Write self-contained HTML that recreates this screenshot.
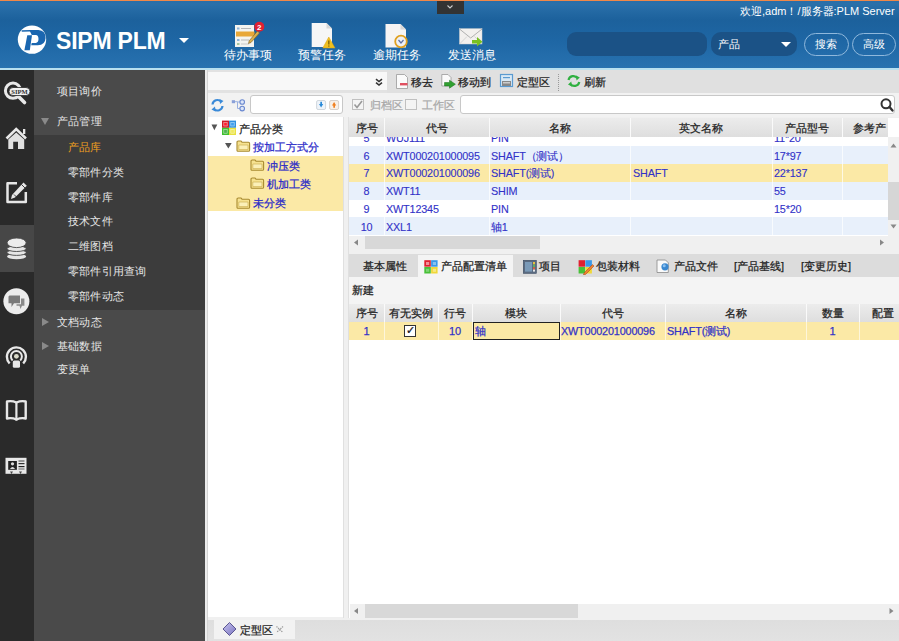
<!DOCTYPE html>
<html><head><meta charset="utf-8">
<style>
*{margin:0;padding:0;box-sizing:border-box}
html,body{width:899px;height:641px;overflow:hidden;background:#dcdcdc;font-family:"Liberation Sans",sans-serif;font-size:11px;color:#222}
.a{position:absolute}
#hdr{left:0;top:0;width:899px;height:70px;background:linear-gradient(#f08848 0,#f08848 1.5px,#2a6ea8 1.5px,#2a70aa 4px,#1c619c 20px,#1e66a4 40px,#2872b0 68px)}
#hdrline{left:0;top:68px;width:899px;height:1.5px;background:#b8e0f0}
.tw{color:#fff}
#iconbar{left:0;top:70px;width:34px;height:571px;background:#2a2a2a}
#side{left:34px;top:70px;width:171px;height:571px;background:#4a4a4a}
#sub{left:34px;top:135px;width:171px;height:175px;background:#3c3c3c}
.mi{position:absolute;color:#e6e6e6;font-size:11px;letter-spacing:0.2px;line-height:14px;white-space:nowrap}
#gapv{left:205px;top:70px;width:3px;height:571px;background:linear-gradient(90deg,#ececec 0,#ececec 2px,#d4d4d4 2px)}
.txt{position:absolute;white-space:nowrap;line-height:14px;-webkit-text-stroke:0.25px currentColor}
.tw{-webkit-text-stroke:0}
</style></head><body>
<div id="hdr" class="a"></div>
<div id="hdrline" class="a"></div>
<div class="a" style="left:437px;top:1px;width:27px;height:13px;background:#333"></div><svg class="a" style="left:445px;top:4px" width="10" height="6" viewBox="0 0 10 6"><path d="M2.5 1.5 L5 4 L7.5 1.5" fill="none" stroke="#ccc" stroke-width="1.1"/></svg>

<!-- logo -->
<svg class="a" style="left:14px;top:22px" width="38" height="36" viewBox="14 22 38 36">
<circle cx="32" cy="39.6" r="14.2" fill="#fff"/>
<path d="M21.6 30.3 L30 30 L30 31.5 L21.8 31.8 Z" fill="#1a66b0"/>
<path d="M29.2 30 L38.5 30 Q45.6 30.6 45.6 38 Q45.2 45.1 37.8 45.3 L31.2 45.3 L31.7 42.9 L35.8 42.9 Q38.5 42.5 38.5 39 Q38.4 34.9 35.8 34.9 L31.8 34.9 Z" fill="#1a66b0"/>
<path d="M27.3 35.2 L32 35.2 L29.8 50.2 L24.4 50.2 Z" fill="#1a66b0"/>
</svg>
<div class="txt tw" style="left:56px;top:28px;font-size:23px;font-weight:bold;line-height:26px;letter-spacing:-0.2px">SIPM PLM</div>
<div class="a" style="left:179px;top:38px;width:0;height:0;border-left:5px solid transparent;border-right:5px solid transparent;border-top:5px solid #fff"></div>

<div class="txt tw" style="left:224px;top:48px;font-size:11.5px">待办事项</div>
<div class="txt tw" style="left:298px;top:48px;font-size:11.5px">预警任务</div>
<div class="txt tw" style="left:373px;top:48px;font-size:11.5px">逾期任务</div>
<div class="txt tw" style="left:448px;top:48px;font-size:11.5px">发送消息</div>
<div class="txt tw" style="left:740px;top:4px;font-size:11px">欢迎,adm！/服务器:PLM Server</div>

<div class="a" style="left:567px;top:32px;width:140px;height:24px;border-radius:9px;background:#1b5286"></div>
<div class="a" style="left:711px;top:32px;width:86px;height:24px;border-radius:10px;background:#1b5286"></div>
<div class="txt tw" style="left:718px;top:37px;font-size:11px">产品</div>
<div class="a" style="left:781px;top:42px;width:0;height:0;border-left:5px solid transparent;border-right:5px solid transparent;border-top:5px solid #fff"></div>
<div class="a" style="left:804px;top:33px;width:45px;height:23px;border-radius:12px;border:1px solid #8fb8dc"></div>
<div class="txt tw" style="left:815px;top:37px;font-size:11px">搜索</div>
<div class="a" style="left:852px;top:33px;width:44px;height:23px;border-radius:12px;border:1px solid #8fb8dc"></div>
<div class="txt tw" style="left:863px;top:37px;font-size:11px">高级</div>

<!-- left -->
<div id="iconbar" class="a"></div>
<div class="a" style="left:0;top:225px;width:34px;height:47px;background:#474747"></div>
<div id="side" class="a"></div>
<div id="sub" class="a"></div>
<div id="gapv" class="a"></div>

<div class="mi" style="left:57px;top:84px">项目询价</div>
<div class="a" style="left:41px;top:118px;width:0;height:0;border-left:4px solid transparent;border-right:4px solid transparent;border-top:7px solid #8a8a8a"></div>
<div class="mi" style="left:57px;top:114px">产品管理</div>
<div class="mi" style="left:68px;top:140px;color:#f0a020">产品库</div>
<div class="mi" style="left:68px;top:165px">零部件分类</div>
<div class="mi" style="left:68px;top:190px">零部件库</div>
<div class="mi" style="left:68px;top:214px">技术文件</div>
<div class="mi" style="left:68px;top:239px">二维图档</div>
<div class="mi" style="left:68px;top:264px">零部件引用查询</div>
<div class="mi" style="left:68px;top:289px">零部件动态</div>
<div class="a" style="left:42px;top:318px;width:0;height:0;border-top:4px solid transparent;border-bottom:4px solid transparent;border-left:7px solid #8a8a8a"></div>
<div class="mi" style="left:57px;top:315px">文档动态</div>
<div class="a" style="left:42px;top:342px;width:0;height:0;border-top:4px solid transparent;border-bottom:4px solid transparent;border-left:7px solid #8a8a8a"></div>
<div class="mi" style="left:57px;top:339px">基础数据</div>
<div class="mi" style="left:57px;top:362px">变更单</div>

<!-- header icons -->
<svg class="a" style="left:230px;top:18px" width="40" height="32" viewBox="230 18 40 32">
<rect x="235" y="25" width="19" height="22" fill="#f4f4f0"/>
<rect x="237" y="27.5" width="2.5" height="2" fill="#8fb4d8"/><rect x="241" y="28" width="10" height="1" fill="#b8b8b8"/>
<rect x="236" y="31.5" width="18.5" height="5" fill="#e8a838"/>
<rect x="237" y="39" width="2.5" height="2" fill="#8fb4d8"/><rect x="241" y="39.5" width="8" height="1" fill="#b8b8b8"/>
<rect x="237" y="43" width="2.5" height="2" fill="#a8c8a0"/><rect x="241" y="43.5" width="8" height="1" fill="#c8c8c8"/>
<path d="M257.5 31 L259.5 33 L251 42.5 L248.5 43.5 L249.2 40.8 Z" fill="#d8b050" stroke="#7a5a20" stroke-width="0.6"/>
<circle cx="259.3" cy="26.8" r="5" fill="#e02030"/>
<text x="259.3" y="30" font-size="8" font-weight="bold" fill="#fff" text-anchor="middle" font-family="Liberation Sans">2</text>
</svg>
<svg class="a" style="left:305px;top:18px" width="40" height="32" viewBox="305 18 40 32">
<path d="M311.7 23 L326.5 23 L332 28.5 L332 47 L311.7 47 Z" fill="#f6f6f6"/>
<path d="M326.5 23 L326.5 28.5 L332 28.5" fill="#d8d8d8"/>
<path d="M328.8 37 L335 48 L322.8 48 Z" fill="#f0c020" stroke="#d8a010" stroke-width="0.5"/>
<rect x="328.3" y="40.5" width="1.1" height="4" fill="#6a5000"/><rect x="328.3" y="45.5" width="1.1" height="1.1" fill="#6a5000"/>
</svg>
<svg class="a" style="left:380px;top:18px" width="40" height="34" viewBox="380 18 40 34">
<path d="M385.5 24 L400.5 24 L406 29.5 L406 47.5 L385.5 47.5 Z" fill="#f6f4f4"/>
<path d="M400.5 24 L400.5 29.5 L406 29.5" fill="#d8d8d8"/>
<circle cx="401" cy="41.5" r="5.8" fill="#eef0f6" stroke="#e0a020" stroke-width="1.8"/>
<path d="M398.5 40 L401 43 L403.5 40" fill="none" stroke="#6070a0" stroke-width="1.2"/>
</svg>
<svg class="a" style="left:452px;top:18px" width="40" height="32" viewBox="452 18 40 32">
<rect x="459.5" y="28.7" width="22.5" height="15.3" fill="#f2f0ee" stroke="#d0d0d0" stroke-width="0.5"/>
<path d="M459.5 29 L470.7 38 L482 29" fill="none" stroke="#a8a8a8" stroke-width="0.9"/>
<path d="M459.5 44 L467 36.5 M482 44 L474.5 36.5" fill="none" stroke="#c8c8c8" stroke-width="0.7"/>
<path d="M472 40 L477 40 L477 37 L482.5 41.8 L477 46.5 L477 43.5 L472 43.5 Z" fill="#78c020"/>
</svg>

<!-- sidebar icons -->
<svg class="a" style="left:0;top:78px" width="34" height="30" viewBox="0 78 34 30">
<circle cx="13" cy="90.7" r="7.6" fill="none" stroke="#e8e8e8" stroke-width="3"/>
<path d="M19 97 L24.5 102.5" stroke="#e8e8e8" stroke-width="3.6" stroke-linecap="round"/>
<rect x="9" y="87.5" width="21" height="8" rx="4" fill="#f0f0f0" stroke="#2a2a2a" stroke-width="0.8"/>
<text x="19.5" y="94.2" font-size="6.6" font-weight="bold" fill="#333" text-anchor="middle" font-family="Liberation Serif">SIPM</text>
</svg>
<svg class="a" style="left:0;top:122px" width="34" height="30" viewBox="0 122 34 30">
<path d="M6.5 138.5 L16.2 129 L26 138.5" fill="none" stroke="#e8e8e8" stroke-width="2.6" stroke-linejoin="miter"/>
<rect x="23" y="129" width="2.3" height="5" fill="#e8e8e8"/>
<path d="M8.3 149 L8.3 139.5 L16.2 132.5 L24.2 139.5 L24.2 149 L18 149 L18 141.7 L13.2 141.7 L13.2 149 Z" fill="#e0e0e0"/>
</svg>
<svg class="a" style="left:0;top:177px" width="34" height="30" viewBox="0 177 34 30">
<path d="M17 183.3 L7.5 183.3 L7.5 202 L25.8 202 L25.8 192" fill="none" stroke="#e6e6e6" stroke-width="2.5" stroke-linejoin="round"/>
<path d="M23.5 182.5 L26.8 185.8 L15 197.5 L11 199 L12 195 Z" fill="#e6e6e6"/>
<path d="M14 194.5 L16.5 197" stroke="#2a2a2a" stroke-width="0.9"/>
<path d="M21.5 184.5 L25 188" stroke="#2a2a2a" stroke-width="0.9"/>
</svg>
<svg class="a" style="left:0;top:232px" width="34" height="30" viewBox="0 232 34 30">
<ellipse cx="16.6" cy="256.5" rx="9.6" ry="2.8" fill="#e6e6e6"/>
<ellipse cx="16.6" cy="252.6" rx="9.6" ry="2.8" fill="#e6e6e6" stroke="#474747" stroke-width="0.9"/>
<ellipse cx="16.6" cy="248.7" rx="9.6" ry="2.8" fill="#e6e6e6" stroke="#474747" stroke-width="0.9"/>
<ellipse cx="16.6" cy="242.8" rx="9.6" ry="4.8" fill="#ececec" stroke="#474747" stroke-width="0.9"/>
</svg>
<svg class="a" style="left:0;top:286px" width="34" height="30" viewBox="0 286 34 30">
<circle cx="16.4" cy="301.2" r="13" fill="#ececec"/>
<path d="M9.5 295.4 L20 295.4 L20 303.3 L14 303.3 L11.5 307 L11.5 303.3 L8.5 303.3 L8.5 296.4 Z" fill="#7a7a7a"/>
<path d="M21 298.6 L24.4 298.6 L24.4 305.7 L22 305.7 L20.5 309 L19.5 305.7 L16.5 305.7 L16.5 304.3 L21 304.3 Z" fill="#8a8a8a"/>
</svg>
<svg class="a" style="left:0;top:341px" width="34" height="30" viewBox="0 341 34 30">
<path d="M9.6 363.5 A9.5 9.5 0 1 1 23.2 363.5" fill="none" stroke="#e8e8e8" stroke-width="2.4"/>
<path d="M12.6 360.5 A5.5 5.5 0 1 1 20.2 360.5" fill="none" stroke="#e8e8e8" stroke-width="2"/>
<circle cx="16.4" cy="356.3" r="2.4" fill="#d8d8c8"/>
<rect x="12.8" y="360.5" width="7.2" height="7.2" rx="1.5" fill="#e8e8e8"/>
</svg>
<svg class="a" style="left:0;top:395px" width="34" height="30" viewBox="0 395 34 30">
<path d="M7 401.5 Q12 400.5 16.4 402.5 Q21 400.5 25.7 401.5 L25.7 418.5 Q21 417.5 16.4 419.5 Q12 417.5 7 418.5 Z" fill="none" stroke="#e8e8e8" stroke-width="2.4" stroke-linejoin="round"/>
<path d="M16.4 402.5 L16.4 420.5" stroke="#e8e8e8" stroke-width="2.2"/>
</svg>
<svg class="a" style="left:0;top:452px" width="34" height="30" viewBox="0 452 34 30">
<rect x="5.5" y="457.8" width="21" height="16" fill="#e8e8e8"/>
<rect x="8.2" y="461" width="8.7" height="8.8" fill="#222"/>
<circle cx="12.5" cy="463.8" r="1.6" fill="#ddd"/><path d="M10 469 Q12.5 465 15 469 Z" fill="#ddd"/>
<rect x="18.5" y="460.5" width="6" height="1" fill="#444"/>
<rect x="18.5" y="463" width="6" height="1.2" fill="#333"/>
<rect x="18.5" y="466" width="6" height="1.2" fill="#222"/>
<rect x="18.5" y="468.5" width="6" height="1" fill="#666"/>
<path d="M10 471.5 L11.5 474 L13 471.5 Z M19 471.5 L20.5 474 L22 471.5 Z" fill="#444"/>
</svg>

<!-- main -->
<div class="a" style="left:208px;top:70px;width:691px;height:571px;background:#f0f0f0"></div><div class="a" style="left:343px;top:117px;width:1px;height:501px;background:#e0e0e0"></div><div class="a" style="left:348px;top:117px;width:1px;height:501px;background:#e0e0e0"></div>
<div class="a" style="left:208px;top:70px;width:180px;height:23px;background:#e2e2e2"></div><div class="a" style="left:208px;top:72px;width:179px;height:18px;background:#f8f8f8"></div>
<div class="a" style="left:387px;top:70px;width:512px;height:23px;background:#e0e0e0"></div>
<div class="a" style="left:208px;top:93px;width:691px;height:24px;background:#f2f2f2"></div>
<div class="txt" style="left:411px;top:75px;font-size:11px">移去</div>
<div class="txt" style="left:458px;top:75px;font-size:11px">移动到</div>
<div class="txt" style="left:517px;top:75px;font-size:11px">定型区</div>
<div class="a" style="left:558px;top:74px;width:0;height:17px;border-left:1px dotted #999"></div>
<div class="txt" style="left:584px;top:75px;font-size:11px">刷新</div>

<!-- row2 -->
<div class="a" style="left:250px;top:95px;width:93px;height:19px;background:#fff;border:1px solid #c8c8c8;border-radius:3px"></div>
<div class="a" style="left:352px;top:99px;width:12px;height:11px;border:1px solid #c0c0c0;background:#f4f4f4"></div>
<svg class="a" style="left:352px;top:99px" width="12" height="11" viewBox="0 0 12 11"><path d="M2.5 5.5 L5 8.5 L10 2" fill="none" stroke="#999" stroke-width="1.6"/></svg><div class="txt" style="left:370px;top:98px;font-size:11px;color:#a8a8a8">归档区</div>
<div class="a" style="left:405px;top:99px;width:12px;height:11px;border:1px solid #c0c0c0;background:#f4f4f4"></div>
<div class="txt" style="left:422px;top:98px;font-size:11px;color:#a8a8a8">工作区</div>
<div class="a" style="left:460px;top:95px;width:435px;height:19px;background:#fff;border:1px solid #c8c8c8;border-radius:3px"></div>

<!-- tree panel -->
<div class="a" style="left:208px;top:117px;width:135px;height:500px;background:#fff"></div>
<div class="a" style="left:208px;top:156px;width:135px;height:55px;background:#fbe9a6"></div>
<div class="txt" style="left:239px;top:122px;font-size:11px">产品分类</div>
<div class="txt" style="left:253px;top:140px;font-size:11px;color:#2828c8">按加工方式分</div>
<div class="txt" style="left:267px;top:159px;font-size:11px;color:#2828c8">冲压类</div>
<div class="txt" style="left:267px;top:177px;font-size:11px;color:#2828c8">机加工类</div>
<div class="txt" style="left:253px;top:196px;font-size:11px;color:#2828c8">未分类</div>

<!-- upper grid -->
<div class="a" style="left:349px;top:118px;width:550px;height:132px;background:#fff"></div>
<div class="a" style="left:349px;top:118px;width:539px;height:19px;background:linear-gradient(#ececec,#dedede)"></div>
<div class="a" style="left:349px;top:164px;width:539px;height:18px;background:#fbe9a6"></div>
<div class="a" style="left:349px;top:146px;width:539px;height:18px;background:#e8f0fb"></div>
<div class="a" style="left:349px;top:182px;width:539px;height:18px;background:#e8f0fb"></div>
<div class="a" style="left:349px;top:217px;width:539px;height:18px;background:#e8f0fb"></div>
<div class="a" style="left:888px;top:137px;width:11px;height:99px;background:#f0f0f0"></div>
<div class="a" style="left:349px;top:236px;width:550px;height:14px;background:#f0f0f0"></div>
<div class="a" style="left:365px;top:236px;width:175px;height:13px;background:#d8d8d8"></div>

<!-- tabs -->
<div class="a" style="left:349px;top:254px;width:550px;height:23px;background:#dcdcdc"></div>
<div class="a" style="left:418px;top:255px;width:95px;height:22px;background:#f4f4f4"></div>
<div class="txt" style="left:363px;top:259px;font-size:11px">基本属性</div>
<div class="txt" style="left:441px;top:259px;font-size:11px">产品配置清单</div>
<div class="txt" style="left:539px;top:259px;font-size:11px">项目</div>
<div class="txt" style="left:596px;top:259px;font-size:11px">包装材料</div>
<div class="txt" style="left:674px;top:259px;font-size:11px">产品文件</div>
<div class="txt" style="left:734px;top:259px;font-size:11px">[产品基线]</div>
<div class="txt" style="left:801px;top:259px;font-size:11px">[变更历史]</div>
<div class="a" style="left:349px;top:277px;width:550px;height:27px;background:#f4f4f4"></div>
<div class="txt" style="left:352px;top:283px;font-size:11px">新建</div>
<div class="a" style="left:349px;top:304px;width:550px;height:314px;background:#fff"></div>
<div class="a" style="left:349px;top:304px;width:550px;height:18px;background:linear-gradient(#ececec,#dedede)"></div>
<div class="a" style="left:349px;top:322px;width:550px;height:18px;background:#fbe9a6"></div>
<div class="a" style="left:350px;top:604px;width:549px;height:14px;background:#f0f0f0"></div>
<div class="a" style="left:365px;top:604px;width:213px;height:14px;background:#d8d8d8"></div>

<!-- toolbar icons -->
<div class="a" style="left:375px;top:77px;width:8px;height:9px">
<svg width="8" height="9" viewBox="0 0 8 9"><path d="M1 1.2 L4 3.6 L7 1.2 M1 4.6 L4 7 L7 4.6" fill="none" stroke="#333" stroke-width="1.6"/></svg></div>
<svg class="a" style="left:395px;top:73px" width="14" height="17" viewBox="395 73 14 17">
<path d="M396.5 74.5 L404.5 74.5 L407.5 77.5 L407.5 88.5 L396.5 88.5 Z" fill="#fafafa" stroke="#999" stroke-width="0.8"/>
<rect x="400" y="83" width="7.5" height="2.4" fill="#e05060"/>
</svg>
<svg class="a" style="left:440px;top:73px" width="17" height="17" viewBox="440 73 17 17">
<path d="M441.8 74.5 L448 74.5 L451 77.5 L451 86 L441.8 86 Z" fill="#fafafa" stroke="#999" stroke-width="0.8"/>
<path d="M444.5 82.5 L449.5 82.5 L449.5 80.2 L455.4 84.2 L449.5 88.2 L449.5 85.9 L444.5 85.9 Z" fill="#30a030" stroke="#187018" stroke-width="0.5"/>
</svg>
<svg class="a" style="left:499px;top:73px" width="16" height="16" viewBox="499 73 16 16">
<rect x="500.5" y="74.5" width="12" height="12" fill="#d8e8f4" stroke="#5a9ad0" stroke-width="1.2"/>
<rect x="503" y="77" width="7" height="1.2" fill="#5a9ad0"/>
<path d="M502 81 L511 81 L511 86 L502 86 Z" fill="#888"/>
<path d="M503 82 L510 82 L510 83.5 L503 83.5 Z" fill="#ccc"/>
</svg>
<svg class="a" style="left:566px;top:74px" width="15" height="14" viewBox="566 74 15 14">
<path d="M568.5 80 A5 5 0 0 1 577.5 78.2" fill="none" stroke="#30b040" stroke-width="2.2"/>
<path d="M576 75.5 L579.8 77.5 L576.5 80.5 Z" fill="#30b040"/>
<path d="M579.3 82 A5 5 0 0 1 570.3 83.8" fill="none" stroke="#30b040" stroke-width="2.2"/>
<path d="M571.8 86.5 L568 84.5 L571.3 81.5 Z" fill="#30b040"/>
</svg>

<!-- tree toolbar icons -->
<svg class="a" style="left:210px;top:98px" width="15" height="15" viewBox="210 98 15 15">
<path d="M212.5 104.5 A5 5 0 0 1 221 101.5" fill="none" stroke="#3a8ad8" stroke-width="2.2"/>
<path d="M219.5 99 L223.5 101 L220 104 Z" fill="#3a8ad8"/>
<path d="M222.5 106 A5 5 0 0 1 214 109" fill="none" stroke="#3a8ad8" stroke-width="2.2"/>
<path d="M215.5 111.5 L211.5 109.5 L215 106.5 Z" fill="#3a8ad8"/>
</svg>
<svg class="a" style="left:230px;top:98px" width="16" height="15" viewBox="230 98 16 15">
<rect x="231.8" y="100.2" width="3.2" height="3" fill="#8aa0d8"/>
<path d="M235 101.7 L237.5 101.7 L237.5 108.5 L239.8 108.5 M237.5 102 L239.8 102" fill="none" stroke="#9ab0e0" stroke-width="1"/>
<circle cx="242.2" cy="102" r="2.3" fill="#dde6f8" stroke="#6a88d0" stroke-width="1.1"/>
<circle cx="242.2" cy="108.6" r="2.3" fill="#dde6f8" stroke="#6a88d0" stroke-width="1.1"/>
</svg>
<svg class="a" style="left:316px;top:100px" width="24" height="11" viewBox="316 100 24 11">
<rect x="316.6" y="100.5" width="9" height="9" rx="1.5" fill="#eef4fa" stroke="#c0c8d0" stroke-width="0.7"/>
<path d="M319 104 L323.2 104 L321.1 107.5 Z M320.3 101.8 L322 101.8 L322 104 L320.3 104 Z" fill="#2a8ad8"/>
<rect x="329.6" y="100.5" width="9" height="9" rx="1.5" fill="#f8f0e8" stroke="#c8c0b8" stroke-width="0.7"/>
<path d="M332 105.5 L336.2 105.5 L334.1 102 Z M333.3 105.5 L335 105.5 L335 107.8 L333.3 107.8 Z" fill="#f08020"/>
</svg>

<!-- tree icons -->
<svg class="a" style="left:208px;top:118px" width="135" height="95" viewBox="208 118 135 95">
<path d="M211.5 124.5 L217.3 124.5 L214.4 130.2 Z" fill="#555"/>
<path d="M225 143 L231.7 143 L228.35 148.6 Z" fill="#555"/>
<rect x="222" y="120.6" width="7" height="7.2" fill="#d01828"/><rect x="223.8" y="122.4" width="3.4" height="3.6" fill="#ff2030" stroke="#f0c0c0" stroke-width="0.6"/>
<rect x="229" y="120.6" width="7" height="7.2" fill="#3090e0"/><rect x="230.8" y="122.4" width="3.4" height="3.6" fill="#40a0f0" stroke="#c0e0f8" stroke-width="0.6"/>
<rect x="222" y="127.8" width="7" height="7.2" fill="#40c030"/><rect x="223.8" y="129.6" width="3.4" height="3.6" fill="#50b050" stroke="#c0f0c0" stroke-width="0.6"/>
<rect x="229" y="127.8" width="7" height="7.2" fill="#e8e040"/><rect x="230.8" y="129.6" width="3.4" height="3.6" fill="#f0e860" stroke="#f8f8c0" stroke-width="0.6"/>
</svg>

<!-- folders -->
<svg class="a" style="left:235.5px;top:140px" width="15" height="12" viewBox="0 0 15 12">
<path d="M1 2.2 Q1 1 2.2 1 L5 1 L6 2.2 L12.5 2.2 Q13.6 2.2 13.6 3.4 L13.6 10.2 Q13.6 11.3 12.5 11.3 L2.2 11.3 Q1 11.3 1 10.2 Z" fill="#f6e290" stroke="#a88a30" stroke-width="1.1"/>
<path d="M2.8 5 L12 5 L12 9.6 L2.8 9.6 Z" fill="#fbf0b8" stroke="#c8a848" stroke-width="0.6"/>
</svg><svg class="a" style="left:250px;top:158.5px" width="15" height="12" viewBox="0 0 15 12">
<path d="M1 2.2 Q1 1 2.2 1 L5 1 L6 2.2 L12.5 2.2 Q13.6 2.2 13.6 3.4 L13.6 10.2 Q13.6 11.3 12.5 11.3 L2.2 11.3 Q1 11.3 1 10.2 Z" fill="#f6e290" stroke="#a88a30" stroke-width="1.1"/>
<path d="M2.8 5 L12 5 L12 9.6 L2.8 9.6 Z" fill="#fbf0b8" stroke="#c8a848" stroke-width="0.6"/>
</svg><svg class="a" style="left:250px;top:177px" width="15" height="12" viewBox="0 0 15 12">
<path d="M1 2.2 Q1 1 2.2 1 L5 1 L6 2.2 L12.5 2.2 Q13.6 2.2 13.6 3.4 L13.6 10.2 Q13.6 11.3 12.5 11.3 L2.2 11.3 Q1 11.3 1 10.2 Z" fill="#f6e290" stroke="#a88a30" stroke-width="1.1"/>
<path d="M2.8 5 L12 5 L12 9.6 L2.8 9.6 Z" fill="#fbf0b8" stroke="#c8a848" stroke-width="0.6"/>
</svg><svg class="a" style="left:235.5px;top:196.5px" width="15" height="12" viewBox="0 0 15 12">
<path d="M1 2.2 Q1 1 2.2 1 L5 1 L6 2.2 L12.5 2.2 Q13.6 2.2 13.6 3.4 L13.6 10.2 Q13.6 11.3 12.5 11.3 L2.2 11.3 Q1 11.3 1 10.2 Z" fill="#f6e290" stroke="#a88a30" stroke-width="1.1"/>
<path d="M2.8 5 L12 5 L12 9.6 L2.8 9.6 Z" fill="#fbf0b8" stroke="#c8a848" stroke-width="0.6"/>
</svg>
<!-- bottom tab -->
<div class="a" style="left:208px;top:618px;width:691px;height:23px;background:linear-gradient(#f0f0f0 0,#f0f0f0 2px,#dedede 2px,#e2e2e2 23px)"></div>
<div class="a" style="left:214px;top:620px;width:81px;height:19px;background:#f2f2f2"></div>
<div class="txt" style="left:240px;top:623px;font-size:11px">定型区</div>
<!-- tab icons -->
<svg class="a" style="left:423px;top:259px" width="16" height="16" viewBox="423 259 16 16">
<rect x="424.3" y="260.2" width="6.5" height="6.5" fill="#e02030"/><rect x="426" y="262" width="3.2" height="3" fill="#fff" opacity="0.5"/>
<rect x="431.1" y="260.2" width="6.5" height="6.5" fill="#3a98e8"/><rect x="432.8" y="262" width="3.2" height="3" fill="#fff" opacity="0.4"/>
<rect x="424.3" y="267" width="6.5" height="6.5" fill="#48c038"/><rect x="426" y="268.8" width="3.2" height="3" fill="#fff" opacity="0.3"/>
<rect x="431.1" y="267" width="6.5" height="6.5" fill="#f0d838"/><rect x="432.8" y="268.8" width="3.2" height="3" fill="#fff" opacity="0.4"/>
</svg>
<svg class="a" style="left:522px;top:259px" width="16" height="16" viewBox="522 259 16 16">
<rect x="523.3" y="260.3" width="13" height="13" fill="#5a6a80" stroke="#3a4a60" stroke-width="0.6"/>
<rect x="525" y="262" width="7" height="9.6" fill="#7a9ab8"/>
<rect x="533" y="262" width="2" height="2.4" fill="#e8c040"/><rect x="533" y="264.6" width="2" height="2.4" fill="#60b060"/><rect x="533" y="267.2" width="2" height="2.4" fill="#d86040"/><rect x="533" y="269.6" width="2" height="2" fill="#e8e8e8"/>
</svg>
<svg class="a" style="left:577px;top:259px" width="18" height="16" viewBox="577 259 18 16">
<rect x="578.6" y="260.2" width="6.5" height="6.5" fill="#e02030"/>
<rect x="585.4" y="260.2" width="6.5" height="6.5" fill="#3a98e8"/>
<rect x="578.6" y="267" width="6.5" height="6.5" fill="#48c038"/>
<rect x="585.4" y="267" width="6.5" height="6.5" fill="#f0d838"/>
<path d="M584 273 L592.5 264.5 L594 266 L585.5 274.5 L583.5 275 Z" fill="#f08030" stroke="#a04010" stroke-width="0.5"/>
</svg>
<svg class="a" style="left:656px;top:259px" width="14" height="15" viewBox="656 259 14 15">
<path d="M657 260 L665.5 260 L668.3 262.8 L668.3 272.5 L657 272.5 Z" fill="#fafafa" stroke="#888" stroke-width="0.8"/>
<circle cx="665" cy="266.8" r="3.6" fill="#3a88d0"/><circle cx="664.2" cy="265.8" r="1.5" fill="#8ac0f0"/>
</svg>

<!-- bottom tab diamond -->
<svg class="a" style="left:222px;top:621px" width="16" height="16" viewBox="222 621 16 16">
<defs><linearGradient id="dg" x1="0" y1="0" x2="1" y2="1"><stop offset="0" stop-color="#c8c4f0"/><stop offset="1" stop-color="#7a74c0"/></linearGradient></defs><path d="M229.5 622.5 L236 629 L229.5 635.5 L223 629 Z" fill="url(#dg)" stroke="#5a5690" stroke-width="1"/>
</svg>
<svg class="a" style="left:275px;top:625px" width="10" height="9" viewBox="0 0 10 9"><path d="M1.5 1.5 L8 7.5 M8 1.5 L1.5 7.5" stroke="#9a9a9a" stroke-width="1.3" stroke-dasharray="1.3 0.9"/></svg>

<!-- scroll arrows -->
<svg class="a" style="left:0;top:0" width="899" height="641" viewBox="0 0 899 641">
<path d="M354 242.5 L358 239.5 L358 245.5 Z" fill="#888"/>
<path d="M880 239.5 L884 242.5 L880 245.5 Z" fill="#888"/>
<path d="M890.5 147.5 L893.5 143.5 L896.5 147.5 Z" fill="#888"/>
<path d="M890.5 224.5 L893.5 228.5 L896.5 224.5 Z" fill="#888"/>
<path d="M354 611 L358 608 L358 614 Z" fill="#888"/>
<path d="M889.5 608 L893.5 611 L889.5 614 Z" fill="#888"/>
<path d="M886 100 m-4.5 0 a4.5 4.5 0 1 0 9 0 a4.5 4.5 0 1 0 -9 0" fill="none" stroke="#333" stroke-width="2" transform="translate(0,3.8)"/>
<path d="M889.5 107 L892.5 110.5" stroke="#333" stroke-width="2.4" stroke-linecap="round"/>
</svg>

<div class="a" style="left:384px;top:118px;width:1px;height:19px;background:#fafafa;"></div>
<div class="a" style="left:489px;top:118px;width:1px;height:19px;background:#fafafa;"></div>
<div class="a" style="left:630px;top:118px;width:1px;height:19px;background:#fafafa;"></div>
<div class="a" style="left:772px;top:118px;width:1px;height:19px;background:#fafafa;"></div>
<div class="a" style="left:842px;top:118px;width:1px;height:19px;background:#fafafa;"></div>
<div class="txt" style="left:349px;top:121px;width:35px;text-align:center;font-size:11px;color:#222;">序号</div>
<div class="txt" style="left:384px;top:121px;width:105px;text-align:center;font-size:11px;color:#222;">代号</div>
<div class="txt" style="left:489px;top:121px;width:141px;text-align:center;font-size:11px;color:#222;">名称</div>
<div class="txt" style="left:630px;top:121px;width:142px;text-align:center;font-size:11px;color:#222;">英文名称</div>
<div class="txt" style="left:772px;top:121px;width:70px;text-align:center;font-size:11px;color:#222;">产品型号</div>
<div class="txt" style="left:853px;top:121px;font-size:11px;color:#222;">参考产</div>
<div class="a" style="left:384px;top:137px;width:1px;height:99px;background:rgba(255,255,255,0.7);"></div>
<div class="a" style="left:489px;top:137px;width:1px;height:99px;background:rgba(255,255,255,0.7);"></div>
<div class="a" style="left:630px;top:137px;width:1px;height:99px;background:rgba(255,255,255,0.7);"></div>
<div class="a" style="left:772px;top:137px;width:1px;height:99px;background:rgba(255,255,255,0.7);"></div>
<div class="a" style="left:842px;top:137px;width:1px;height:99px;background:rgba(255,255,255,0.7);"></div>
<div class="a" style="left:888px;top:182px;width:11px;height:38px;background:#d6d6d6;"></div>
<div class="a" style="left:349px;top:137px;width:539px;height:99px;overflow:hidden"><div class="a" style="left:-349px;top:-137px;width:899px;height:641px"><div class="txt" style="left:349px;top:131px;width:35px;text-align:center;color:#3232c8;font-size:10.8px;letter-spacing:-0.15px;-webkit-text-stroke:0.12px currentColor">5</div><div class="txt" style="left:386px;top:131px;color:#3232c8;font-size:10.8px;letter-spacing:-0.15px;-webkit-text-stroke:0.12px currentColor">WUJ111</div><div class="txt" style="left:491px;top:131px;color:#3232c8;font-size:10.8px;letter-spacing:-0.15px;-webkit-text-stroke:0.12px currentColor">PIN</div><div class="txt" style="left:774px;top:131px;color:#3232c8;font-size:10.8px;letter-spacing:-0.15px;-webkit-text-stroke:0.12px currentColor">11*20</div><div class="txt" style="left:349px;top:148.7px;width:35px;text-align:center;color:#3232c8;font-size:10.8px;letter-spacing:-0.15px;-webkit-text-stroke:0.12px currentColor">6</div><div class="txt" style="left:386px;top:148.7px;color:#3232c8;font-size:10.8px;letter-spacing:-0.15px;-webkit-text-stroke:0.12px currentColor">XWT000201000095</div><div class="txt" style="left:491px;top:148.7px;color:#3232c8;font-size:10.8px;letter-spacing:-0.15px;-webkit-text-stroke:0.12px currentColor">SHAFT（测试）</div><div class="txt" style="left:774px;top:148.7px;color:#3232c8;font-size:10.8px;letter-spacing:-0.15px;-webkit-text-stroke:0.12px currentColor">17*97</div><div class="txt" style="left:349px;top:166.3px;width:35px;text-align:center;color:#3232c8;font-size:10.8px;letter-spacing:-0.15px;-webkit-text-stroke:0.12px currentColor">7</div><div class="txt" style="left:386px;top:166.3px;color:#3232c8;font-size:10.8px;letter-spacing:-0.15px;-webkit-text-stroke:0.12px currentColor">XWT000201000096</div><div class="txt" style="left:491px;top:166.3px;color:#3232c8;font-size:10.8px;letter-spacing:-0.15px;-webkit-text-stroke:0.12px currentColor">SHAFT(测试)</div><div class="txt" style="left:633px;top:166.3px;color:#3232c8;font-size:10.8px;letter-spacing:-0.15px;-webkit-text-stroke:0.12px currentColor">SHAFT</div><div class="txt" style="left:774px;top:166.3px;color:#3232c8;font-size:10.8px;letter-spacing:-0.15px;-webkit-text-stroke:0.12px currentColor">22*137</div><div class="txt" style="left:349px;top:184.2px;width:35px;text-align:center;color:#3232c8;font-size:10.8px;letter-spacing:-0.15px;-webkit-text-stroke:0.12px currentColor">8</div><div class="txt" style="left:386px;top:184.2px;color:#3232c8;font-size:10.8px;letter-spacing:-0.15px;-webkit-text-stroke:0.12px currentColor">XWT11</div><div class="txt" style="left:491px;top:184.2px;color:#3232c8;font-size:10.8px;letter-spacing:-0.15px;-webkit-text-stroke:0.12px currentColor">SHIM</div><div class="txt" style="left:774px;top:184.2px;color:#3232c8;font-size:10.8px;letter-spacing:-0.15px;-webkit-text-stroke:0.12px currentColor">55</div><div class="txt" style="left:349px;top:202px;width:35px;text-align:center;color:#3232c8;font-size:10.8px;letter-spacing:-0.15px;-webkit-text-stroke:0.12px currentColor">9</div><div class="txt" style="left:386px;top:202px;color:#3232c8;font-size:10.8px;letter-spacing:-0.15px;-webkit-text-stroke:0.12px currentColor">XWT12345</div><div class="txt" style="left:491px;top:202px;color:#3232c8;font-size:10.8px;letter-spacing:-0.15px;-webkit-text-stroke:0.12px currentColor">PIN</div><div class="txt" style="left:774px;top:202px;color:#3232c8;font-size:10.8px;letter-spacing:-0.15px;-webkit-text-stroke:0.12px currentColor">15*20</div><div class="txt" style="left:349px;top:219.5px;width:35px;text-align:center;color:#3232c8;font-size:10.8px;letter-spacing:-0.15px;-webkit-text-stroke:0.12px currentColor">10</div><div class="txt" style="left:386px;top:219.5px;color:#3232c8;font-size:10.8px;letter-spacing:-0.15px;-webkit-text-stroke:0.12px currentColor">XXL1</div><div class="txt" style="left:491px;top:219.5px;color:#3232c8;font-size:10.8px;letter-spacing:-0.15px;-webkit-text-stroke:0.12px currentColor">轴1</div></div></div>
<div class="a" style="left:384px;top:304px;width:1px;height:18px;background:#fafafa;"></div>
<div class="a" style="left:438px;top:304px;width:1px;height:18px;background:#fafafa;"></div>
<div class="a" style="left:472px;top:304px;width:1px;height:18px;background:#fafafa;"></div>
<div class="a" style="left:560px;top:304px;width:1px;height:18px;background:#fafafa;"></div>
<div class="a" style="left:665px;top:304px;width:1px;height:18px;background:#fafafa;"></div>
<div class="a" style="left:806px;top:304px;width:1px;height:18px;background:#fafafa;"></div>
<div class="a" style="left:859px;top:304px;width:1px;height:18px;background:#fafafa;"></div>
<div class="txt" style="left:349px;top:306px;width:35px;text-align:center;font-size:11px;color:#222;">序号</div>
<div class="txt" style="left:384px;top:306px;width:54px;text-align:center;font-size:11px;color:#222;">有无实例</div>
<div class="txt" style="left:438px;top:306px;width:34px;text-align:center;font-size:11px;color:#222;">行号</div>
<div class="txt" style="left:472px;top:306px;width:88px;text-align:center;font-size:11px;color:#222;">模块</div>
<div class="txt" style="left:560px;top:306px;width:105px;text-align:center;font-size:11px;color:#222;">代号</div>
<div class="txt" style="left:665px;top:306px;width:141px;text-align:center;font-size:11px;color:#222;">名称</div>
<div class="txt" style="left:806px;top:306px;width:53px;text-align:center;font-size:11px;color:#222;">数量</div>
<div class="txt" style="left:872px;top:306px;font-size:11px;color:#222;">配置</div>
<div class="txt" style="left:349px;top:324px;width:35px;text-align:center;font-size:11px;color:#3232c8;">1</div>
<div class="txt" style="left:438px;top:324px;width:34px;text-align:center;font-size:11px;color:#3232c8;">10</div>
<div class="a" style="left:384px;top:322px;width:1px;height:18px;background:rgba(255,255,255,0.6);"></div>
<div class="a" style="left:438px;top:322px;width:1px;height:18px;background:rgba(255,255,255,0.6);"></div>
<div class="a" style="left:472px;top:322px;width:1px;height:18px;background:rgba(255,255,255,0.6);"></div>
<div class="a" style="left:560px;top:322px;width:1px;height:18px;background:rgba(255,255,255,0.6);"></div>
<div class="a" style="left:665px;top:322px;width:1px;height:18px;background:rgba(255,255,255,0.6);"></div>
<div class="a" style="left:806px;top:322px;width:1px;height:18px;background:rgba(255,255,255,0.6);"></div>
<div class="a" style="left:859px;top:322px;width:1px;height:18px;background:rgba(255,255,255,0.6);"></div>
<div class="a" style="left:473px;top:322px;width:87px;height:18px;background:#fbe9a6;border:1px solid #222"></div>
<div class="txt" style="left:475px;top:324px;font-size:11px;color:#3232c8;">轴</div>
<div class="txt" style="left:561px;top:324px;font-size:10.8px;color:#3232c8;letter-spacing:-0.15px">XWT000201000096</div>
<div class="txt" style="left:667px;top:324px;font-size:10.8px;color:#3232c8;letter-spacing:-0.15px">SHAFT(测试)</div>
<div class="txt" style="left:806px;top:324px;width:53px;text-align:center;font-size:11px;color:#3232c8;">1</div>
<div class="a" style="left:404px;top:325px;width:12px;height:12px;background:#fff;border:1px solid #333"></div>
<div class="txt" style="left:406px;top:323px;font-size:11px;color:#111;">✓</div>
</body></html>
